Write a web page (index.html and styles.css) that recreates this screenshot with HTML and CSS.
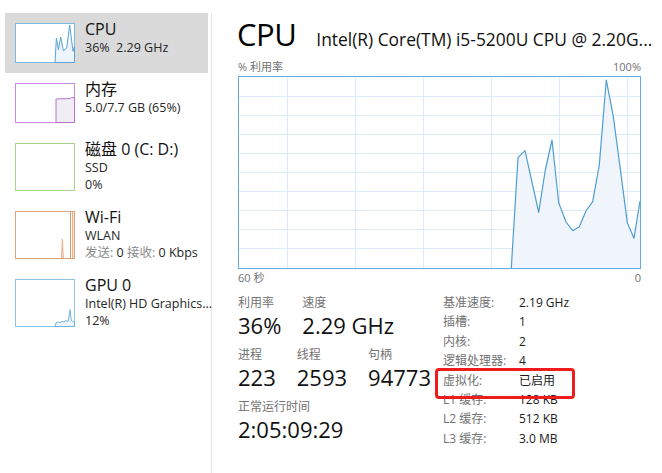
FILE: index.html
```html
<!DOCTYPE html>
<html lang="zh-CN">
<head>
<meta charset="utf-8">
<title>任务管理器 - CPU</title>
<link rel="stylesheet" href="styles.css">
</head>
<body>
<div class="app">
  <nav class="sidebar">
    <div class="item selected">
      <svg class="thumb" width="60" height="40" viewBox="0 0 60 40">
        <rect x="0.5" y="0.5" width="59" height="39" fill="#fff" stroke="#7db6de"/>
        <polygon points="40,39.5 41.4,15 43.4,26.7 45.7,14 48.4,27.7 51.7,25 54.7,2 58,28.3 59.5,23.4 59.5,39.5" fill="#edf4fb" stroke="#5aa2d6" stroke-width="1" stroke-linejoin="round"/>
      </svg>
      <div class="info">
        <div class="name">CPU</div>
        <div class="sub">36%&nbsp; 2.29 GHz</div>
      </div>
    </div>
    <div class="item">
      <svg class="thumb" width="60" height="40" viewBox="0 0 60 40">
        <rect x="0.5" y="0.5" width="59" height="39" fill="#fff" stroke="#c68bda"/>
        <polygon points="41,39.5 41,16 55,15.6 56.5,14.6 59.5,14.6 59.5,39.5" fill="#f1edf4" stroke="#b874cc" stroke-width="1"/>
      </svg>
      <div class="info">
        <div class="name">内存</div>
        <div class="sub">5.0/7.7 GB (65%)</div>
      </div>
    </div>
    <div class="item">
      <svg class="thumb" width="60" height="48" viewBox="0 0 60 48">
        <rect x="0.5" y="0.5" width="59" height="47" fill="#fff" stroke="#a6d48c"/>
      </svg>
      <div class="info">
        <div class="name">磁盘 0 (C: D:)</div>
        <div class="sub">SSD</div>
        <div class="sub">0%</div>
      </div>
    </div>
    <div class="item">
      <svg class="thumb" width="60" height="48" viewBox="0 0 60 48">
        <rect x="0.5" y="0.5" width="59" height="47" fill="#fff" stroke="#dca47c"/>
        <polygon points="46.4,47 47.4,28 48.4,47" fill="#f8d9c8" stroke="#eaa585" stroke-width="0.8"/>
        <line x1="55.5" y1="1" x2="55.5" y2="47" stroke="#d99563" stroke-width="1"/>
        <line x1="57.8" y1="1" x2="57.8" y2="47" stroke="#d99563" stroke-width="1"/>
      </svg>
      <div class="info">
        <div class="name">Wi-Fi</div>
        <div class="sub">WLAN</div>
        <div class="sub"><span class="dim">发送:</span> 0 <span class="dim">接收:</span> 0 Kbps</div>
      </div>
    </div>
    <div class="item">
      <svg class="thumb" width="60" height="48" viewBox="0 0 60 48">
        <rect x="0.5" y="0.5" width="59" height="47" fill="#fff" stroke="#8fc2e5"/>
        <polygon points="40,47.5 41,44 43,43 45,43.5 47,42.5 49,43 51,41.5 53,42.5 54,38 55,30.5 56.3,41 57.5,42.5 59.5,43 59.5,47.5" fill="#edf4fb" stroke="#6aaedc" stroke-width="0.9" stroke-linejoin="round"/>
      </svg>
      <div class="info">
        <div class="name">GPU 0</div>
        <div class="sub">Intel(R) HD Graphics...</div>
        <div class="sub">12%</div>
      </div>
    </div>
  </nav>

  <main class="panel">
    <header class="head">
      <h1 class="title">CPU</h1>
      <div class="model">Intel(R) Core(TM) i5-5200U CPU @ 2.20G...</div>
    </header>

    <div class="axis top"><span>% 利用率</span><span>100%</span></div>
    <div class="graph">
      <svg width="403" height="193" viewBox="0 0 403 193">
        <rect x="0.5" y="0.5" width="402" height="192" fill="#fff"/>
        <g stroke="#dcebf7" stroke-width="1">
          <line x1="49.5" y1="1" x2="49.5" y2="192"/>
          <line x1="117.5" y1="1" x2="117.5" y2="192"/>
          <line x1="185.5" y1="1" x2="185.5" y2="192"/>
          <line x1="253.5" y1="1" x2="253.5" y2="192"/>
          <line x1="321.5" y1="1" x2="321.5" y2="192"/>
          <line x1="389.5" y1="1" x2="389.5" y2="192"/>
          <line x1="1" y1="20.5" x2="402" y2="20.5"/>
          <line x1="1" y1="39.5" x2="402" y2="39.5"/>
          <line x1="1" y1="58.5" x2="402" y2="58.5"/>
          <line x1="1" y1="77.5" x2="402" y2="77.5"/>
          <line x1="1" y1="96.5" x2="402" y2="96.5"/>
          <line x1="1" y1="115.5" x2="402" y2="115.5"/>
          <line x1="1" y1="134.5" x2="402" y2="134.5"/>
          <line x1="1" y1="153.5" x2="402" y2="153.5"/>
          <line x1="1" y1="172.5" x2="402" y2="172.5"/>
        </g>
        <polygon points="273.3,192 280,81.7 287,74.7 300.7,136.3 307.3,94 314,64 320.7,126.7 328,146 334.7,154.7 341.3,150.7 348,135 354.7,125.7 361.3,89 368.3,4 375.3,40.7 382,90.7 389.3,146.7 396,162.3 402,125 402,192" fill="#eff5fa"/>
        <polyline points="273.3,192 280,81.7 287,74.7 300.7,136.3 307.3,94 314,64 320.7,126.7 328,146 334.7,154.7 341.3,150.7 348,135 354.7,125.7 361.3,89 368.3,4 375.3,40.7 382,90.7 389.3,146.7 396,162.3 402,125" fill="none" stroke="#4e9dd4" stroke-width="1.2" stroke-linejoin="round"/>
        <rect x="0.5" y="0.5" width="402" height="192" fill="none" stroke="#62abde"/>
      </svg>
    </div>
    <div class="axis bottom"><span>60 秒</span><span>0</span></div>

    <section class="stats">
      <div class="live">
        <div class="row">
          <div class="stat"><div class="label">利用率</div><div class="value">36%</div></div>
          <div class="stat"><div class="label">速度</div><div class="value">2.29 GHz</div></div>
        </div>
        <div class="row">
          <div class="stat"><div class="label">进程</div><div class="value">223</div></div>
          <div class="stat"><div class="label">线程</div><div class="value">2593</div></div>
          <div class="stat"><div class="label">句柄</div><div class="value">94773</div></div>
        </div>
        <div class="row">
          <div class="stat"><div class="label">正常运行时间</div><div class="value">2:05:09:29</div></div>
        </div>
      </div>
      <div class="specs">
        <div class="spec"><span class="key">基准速度:</span><span class="val">2.19 GHz</span></div>
        <div class="spec"><span class="key">插槽:</span><span class="val">1</span></div>
        <div class="spec"><span class="key">内核:</span><span class="val">2</span></div>
        <div class="spec"><span class="key">逻辑处理器:</span><span class="val">4</span></div>
        <div class="spec flagged"><span class="key">虚拟化:</span><span class="val">已启用</span></div>
        <div class="spec"><span class="key">L1 缓存:</span><span class="val">128 KB</span></div>
        <div class="spec"><span class="key">L2 缓存:</span><span class="val">512 KB</span></div>
        <div class="spec"><span class="key">L3 缓存:</span><span class="val">3.0 MB</span></div>
      </div>
    </section>
  </main>
</div>
</body>
</html>
```

FILE: styles.css
```css
* {
  box-sizing: border-box;
}

html, body {
  margin: 0;
  padding: 0;
  background: #ffffff;
}

body {
  font-family: "Open Sans", "Noto Sans CJK SC", sans-serif;
  color: #1a1a1a;
  width: 662px;
  height: 473px;
  overflow: hidden;
}

.app {
  display: flex;
  height: 473px;
}

/* ---------- sidebar ---------- */
.sidebar {
  width: 212px;
  flex: none;
  margin-top: 13px;
  padding: 0 1px 0 5px;
  border-right: 1px solid #e4e4e4;
  display: flex;
  flex-direction: column;
}

.item {
  display: flex;
  align-items: flex-start;
  gap: 10px;
  padding: 10px 0 10px 10px;
  margin-right: 2px;
}

.item.selected {
  background: #dadada;
}

.thumb {
  display: block;
  flex: none;
}

.info {
  margin-top: -4px;
  margin-bottom: -4px;
  white-space: nowrap;
}

.name {
  font-size: 16px;
  line-height: 20px;
  color: #111;
}

.sub {
  font-size: 12.5px;
  line-height: 17px;
  color: #262626;
}

.dim {
  color: #8a8a8a;
}

/* ---------- main panel ---------- */
.panel {
  flex: 1;
  min-width: 0;
  padding: 16px 21px 0 26px;
  display: flex;
  flex-direction: column;
}

.head {
  display: flex;
  align-items: baseline;
  gap: 20px;
  height: 36px;
  min-width: 0;
  white-space: nowrap;
}

.title {
  margin: 0 0 0 -1px;
  font-size: 31px;
  line-height: 36px;
  font-weight: 400;
  letter-spacing: -0.5px;
  color: #000;
}

.model {
  font-size: 17.4px;
  color: #111;
}

.axis {
  display: flex;
  justify-content: space-between;
  width: 403px;
  font-size: 11px;
  line-height: 14px;
  height: 14px;
  color: #727272;
}

.axis.top {
  margin-top: 8px;
}

.axis.bottom {
  margin-top: 2px;
}

.graph {
  margin-top: 2px;
  width: 403px;
  height: 193px;
}

.graph svg {
  display: block;
}

/* ---------- stats ---------- */
.stats {
  display: flex;
  margin-top: 8px;
}

.live {
  width: 205px;
  flex: none;
  padding-top: 2px;
  display: flex;
  flex-direction: column;
  gap: 8px;
}

.row {
  display: flex;
  gap: 21px;
}

.label {
  font-size: 12px;
  line-height: 16px;
  height: 16px;
  color: #727272;
}

.value {
  font-size: 22px;
  line-height: 28px;
  height: 28px;
  color: #111;
  white-space: nowrap;
}

.specs {
  display: flex;
  flex-direction: column;
}

.spec {
  display: flex;
  font-size: 12px;
  line-height: 19.4px;
  height: 19.4px;
  white-space: nowrap;
}

.key {
  width: 76px;
  flex: none;
  color: #727272;
}

.val {
  color: #1a1a1a;
}

.spec.flagged {
  position: relative;
}

.spec.flagged::after {
  content: "";
  position: absolute;
  left: -8px;
  top: -3px;
  width: 134px;
  height: 25px;
  border: 3px solid #ee1d1d;
  border-radius: 4px;
}
```
